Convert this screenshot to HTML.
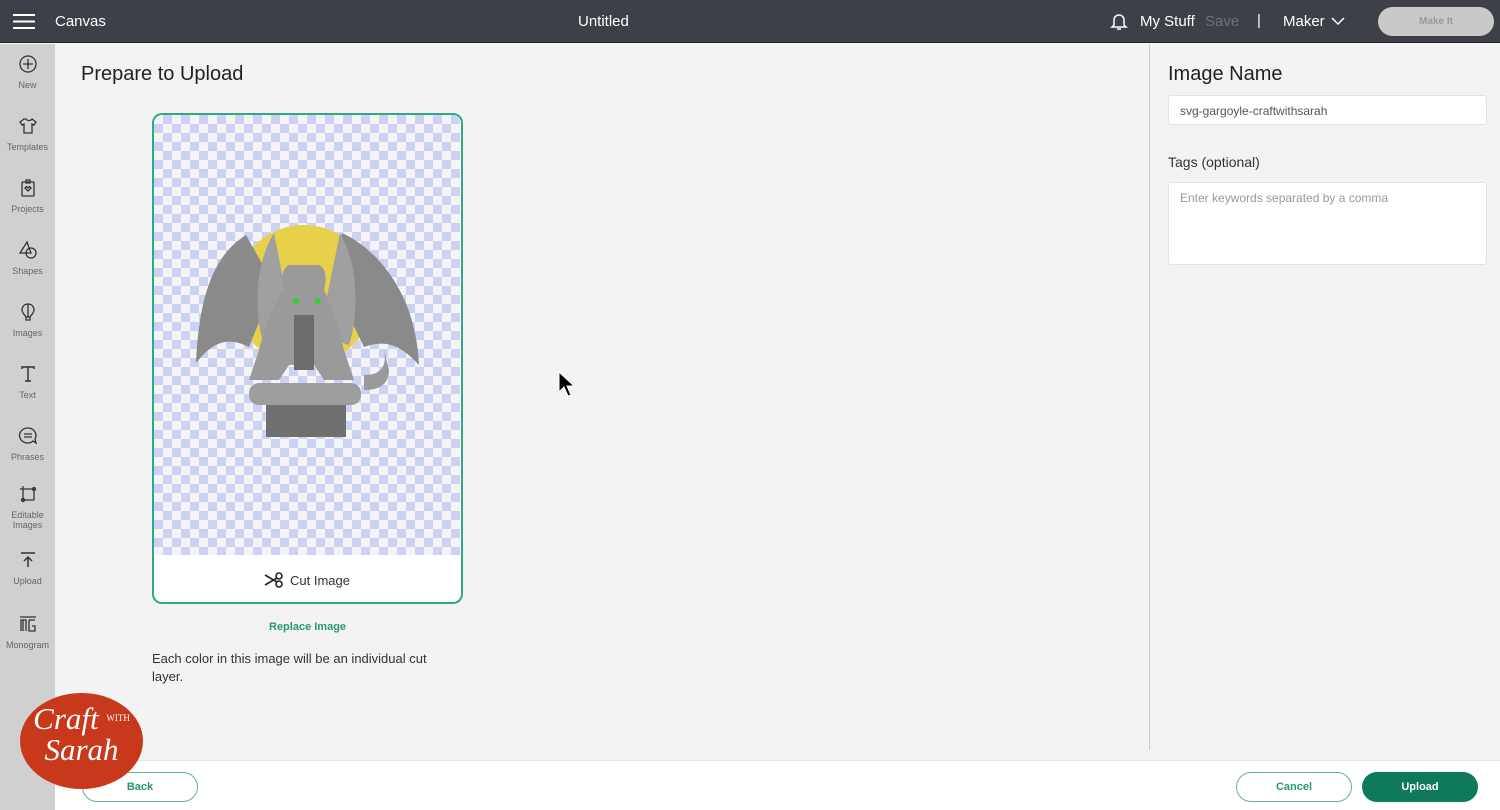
<!DOCTYPE html>
<html><head><meta charset="utf-8"><style>
*{box-sizing:border-box;margin:0;padding:0}
body{width:1500px;height:810px;overflow:hidden;background:#f3f3f3;font-family:"Liberation Sans",sans-serif;position:relative}
.top{position:absolute;left:0;top:0;width:1500px;height:43px;background:#3d4046;border-bottom:1px solid #222}
.top div{position:absolute;color:#fff;font-size:15px}
.side{position:absolute;left:0;top:44px;width:55px;height:766px;background:#d0d0d0}
.si{position:absolute;left:0;width:55px;text-align:center;font-size:9px;color:#666}
.si svg{display:block;margin:0 auto 6px}
.abs{position:absolute}
.check{position:absolute;left:154px;top:115px;width:306px;height:440px;
background-color:#f4f4f6;background-image:linear-gradient(45deg,#cbd2f2 25%,transparent 25%,transparent 75%,#cbd2f2 75%),linear-gradient(45deg,#cbd2f2 25%,transparent 25%,transparent 75%,#cbd2f2 75%);background-size:18px 18px;background-position:0 0,9px 9px;border-radius:8px 8px 0 0}
.btn{position:absolute;border-radius:15px;font-size:11px;font-weight:bold;text-align:center;line-height:28px;height:30px}
</style></head><body>
<div class="top">
 <svg class="abs" style="left:13px;top:13px" width="22" height="17"><rect y="1" width="22" height="2" fill="#fff"/><rect y="7.5" width="22" height="2" fill="#fff"/><rect y="14" width="22" height="2" fill="#fff"/></svg>
 <div style="left:55px;top:13px">Canvas</div>
 <div style="left:578px;top:13px">Untitled</div>
 <svg class="abs" style="left:1110px;top:11px" width="18" height="20" fill="none" stroke="#fff" stroke-width="1.5"><path d="M4 14V9a5 5 0 0 1 10 0v5l2 2H2z"/><path d="M7 18h4"/></svg>
 <div style="left:1140px;top:13px">My Stuff</div>
 <div style="left:1205px;top:13px;color:#6e7177">Save</div>
 <div style="left:1257px;top:12px">|</div>
 <div style="left:1283px;top:13px">Maker</div>
 <svg class="abs" style="left:1331px;top:17px" width="14" height="9" fill="none" stroke="#fff" stroke-width="1.5"><path d="M1 1l6 6 6-6"/></svg>
 <div style="left:1378px;top:7px;width:116px;height:29px;border-radius:15px;background:#c9c9c9;color:#999;font-size:10px;font-weight:bold;text-align:center;line-height:29px">Make It</div>
</div>
<div class="side">
 <div class="si" style="top:10px"><svg width="20" height="20" fill="none" stroke="#333" stroke-width="1.3"><circle cx="10" cy="10" r="8"/><path d="M10 5v10M5 10h10"/></svg>New</div>
 <div class="si" style="top:72px"><svg width="20" height="20" fill="none" stroke="#333" stroke-width="1.3"><path d="M6 3l-4 3 2 3 2-1v9h8V8l2 1 2-3-4-3c-1 2-5 2-6 0z"/></svg>Templates</div>
 <div class="si" style="top:134px"><svg width="20" height="20" fill="none" stroke="#333" stroke-width="1.3"><rect x="4" y="4" width="12" height="14" rx="1"/><path d="M8 2h4v3H8zM10 13l-3-3 1.5-1.5L10 10l1.5-1.5L13 10z"/></svg>Projects</div>
 <div class="si" style="top:196px"><svg width="20" height="20" fill="none" stroke="#333" stroke-width="1.3"><path d="M9 2L2 13h11z"/><circle cx="13" cy="13" r="5"/></svg>Shapes</div>
 <div class="si" style="top:258px"><svg width="20" height="20" fill="none" stroke="#333" stroke-width="1.3"><path d="M10 2c4 0 6 3 6 6 0 3-3 5-4 7H8C7 13 4 11 4 8c0-3 2-6 6-6zM8 15v3h4v-3M10 2v13"/></svg>Images</div>
 <div class="si" style="top:320px"><svg width="20" height="20" fill="none" stroke="#333" stroke-width="1.5"><path d="M4 5V3h12v2M10 3v14M7 17h6"/></svg>Text</div>
 <div class="si" style="top:382px"><svg width="20" height="20" fill="none" stroke="#333" stroke-width="1.3"><path d="M10 2a8 7.5 0 1 0 5 13l3 2-1-4A8 7.5 0 0 0 10 2zM6 8h8M6 11h8"/></svg>Phrases</div>
 <div class="si" style="top:440px"><svg width="20" height="20" fill="none" stroke="#333" stroke-width="1.3"><path d="M5 2v14h11M2 5h14v11"/><circle cx="5" cy="16" r="1.5"/><circle cx="16" cy="5" r="1.5"/></svg>Editable<br>Images</div>
 <div class="si" style="top:506px"><svg width="20" height="20" fill="none" stroke="#333" stroke-width="1.5"><path d="M3 3h14M10 17V7M6 11l4-4 4 4"/></svg>Upload</div>
 <div class="si" style="top:570px"><svg width="20" height="20" fill="none" stroke="#333" stroke-width="1.3"><path d="M2 3h16M3 17V6h5v11M5 6v11M11 6h6M11 6v11h6v-5h-3"/></svg>Monogram</div>
</div>
<div class="abs" style="left:81px;top:63px;font-size:20px;color:#222">Prepare to Upload</div>
<div class="abs" style="left:152px;top:113px;width:311px;height:491px;border:2px solid #2fa984;border-radius:10px;background:#fff"></div>
<div class="check"></div>
<svg class="abs" style="left:154px;top:115px" width="306" height="440" viewBox="0 0 306 440">
 <circle cx="150" cy="180" r="70" fill="#e8d14a"/>
 <path d="M92 120 C60 140 45 180 42 248 C60 225 75 222 95 232 L120 170 Z" fill="#8a8a8a"/>
 <path d="M188 118 C225 135 262 180 265 250 C245 228 230 225 210 232 L180 170 Z" fill="#8a8a8a"/>
 <path d="M120 118 C100 150 100 200 110 230 L140 220 Z M186 118 C205 150 205 200 195 230 L165 220 Z" fill="#a0a0a0"/>
 <path d="M130 175 q-5 -20 5 -25 l30 0 q10 5 5 25 q10 20 20 60 l10 30 -30 0 -10 -15 -25 0 -10 15 -30 0 10 -30 q10 -40 25 -60z" fill="#9a9a9a"/>
 <path d="M140 200 h20 v55 h-20z" fill="#6c6c6c"/>
 <path d="M210 260 q25 0 20 -25 l5 20 q0 20 -25 20z" fill="#9a9a9a"/>
 <circle cx="142" cy="186" r="3" fill="#2fd02f"/><circle cx="164" cy="186" r="3" fill="#2fd02f"/>
 <rect x="95" y="268" width="112" height="22" rx="10" fill="#9e9e9e"/>
 <rect x="112" y="290" width="80" height="32" fill="#707070"/>
</svg>
<svg class="abs" style="left:264px;top:572px" width="20" height="16" fill="none" stroke="#222" stroke-width="1.6"><circle cx="15" cy="4" r="3"/><circle cx="15" cy="12" r="3"/><path d="M1 3l12 7M1 13l12-7"/></svg>
<div class="abs" style="left:290px;top:573px;font-size:13px;color:#333">Cut Image</div>
<div class="abs" style="left:269px;top:621px;font-size:11px;font-weight:bold;color:#2a9672">Replace Image</div>
<div class="abs" style="left:152px;top:650px;font-size:13px;color:#333;line-height:18px;width:292px">Each color in this image will be an individual cut layer.</div>
<div class="abs" style="left:1149px;top:44px;width:1px;height:706px;background:#ccc"></div>
<div class="abs" style="left:1168px;top:63px;font-size:20px;color:#222">Image Name</div>
<div class="abs" style="left:1168px;top:95px;width:319px;height:30px;background:#fff;border:1px solid #e2e2e2;border-radius:3px;font-size:12px;color:#555;padding:8px 11px">svg-gargoyle-craftwithsarah</div>
<div class="abs" style="left:1168px;top:154px;font-size:14px;color:#333">Tags (optional)</div>
<div class="abs" style="left:1168px;top:182px;width:319px;height:83px;background:#fff;border:1px solid #e2e2e2;border-radius:3px;font-size:12px;color:#999;padding:8px 11px">Enter keywords separated by a comma</div>
<div class="abs" style="left:55px;top:760px;width:1445px;height:50px;background:#fff;border-top:1px solid #e6e6e6"></div>
<div class="btn" style="left:82px;top:772px;width:116px;border:1px solid #5fb39a;color:#2a9672;background:#fff">Back</div>
<div class="btn" style="left:1236px;top:772px;width:116px;border:1px solid #5fb39a;color:#2a9672;background:#fff">Cancel</div>
<div class="btn" style="left:1362px;top:772px;width:116px;background:#0f7a5b;color:#fff;line-height:30px">Upload</div>
<div class="abs" style="left:20px;top:693px;width:123px;height:96px;border-radius:50%;background:#c8391c;color:#fff;font-family:'Liberation Serif',serif;font-style:italic;text-align:center">
 <div style="font-size:31px;margin-top:10px;line-height:30px">Craft <span style="font-size:9px;font-style:normal;vertical-align:8px">WITH</span></div>
 <div style="font-size:31px;line-height:32px">Sarah</div>
</div>
<svg class="abs" style="left:558px;top:371px" width="18" height="27"><path d="M1 1v20l5-5 4 9 3-1-4-9h7z" fill="#000" stroke="#fff" stroke-width="1"/></svg>
</body></html>
